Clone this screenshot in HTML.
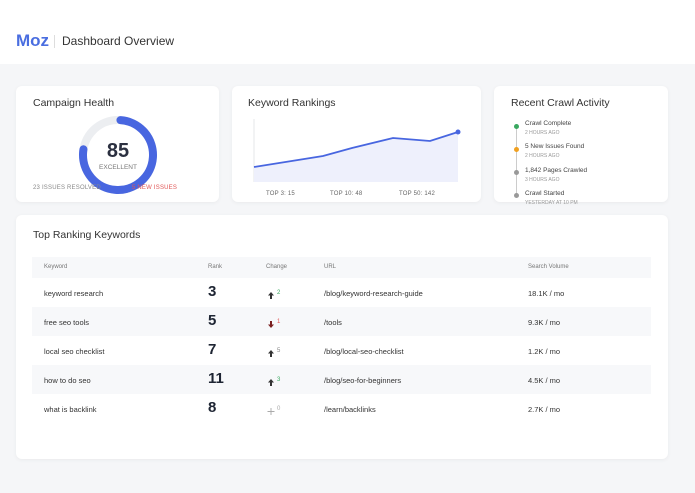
<!DOCTYPE html>
<html><head><style>
*{margin:0;padding:0;box-sizing:border-box}
body{width:695px;height:493px;background:#f5f6f8;font-family:"Liberation Sans",sans-serif;position:relative;overflow:hidden;color:#2b3040}
.hdr{position:absolute;left:0;top:0;width:695px;height:64px;background:#fff}
.logo{position:absolute;left:16px;top:31px;font-size:17px;font-weight:bold;color:#4a6ee0}
.sep{position:absolute;left:54px;top:35px;width:1px;height:13px;background:#ddd}
.title{position:absolute;left:62px;top:34px;font-size:12px;color:#333}
.card{position:absolute;background:#fff;border-radius:6px;box-shadow:0 1px 4px rgba(0,0,0,.05)}
.ct{position:absolute;font-size:10.5px;color:#333}
.sm{position:absolute;font-size:6px;color:#888;letter-spacing:.2px}
.tl{position:absolute;font-size:6.5px;color:#444}
.ts{position:absolute;font-size:5px;color:#999}
.dot{position:absolute;width:5px;height:5px;border-radius:50%;left:514px}
.row{position:absolute;left:32px;width:619px;height:29px}
.row span{position:absolute;font-size:7.5px;color:#333;top:11px}
.row b{position:absolute;left:176px;top:5px;font-size:15px;color:#1e2533}
.row svg{position:absolute;left:235px;top:13px}
.row em{position:absolute;left:245px;top:12px;font-style:normal;font-size:6px}
</style></head><body>
<div class="hdr"><div class="logo">Moz</div><div class="sep"></div><div class="title">Dashboard Overview</div></div>

<div class="card" style="left:16px;top:86px;width:203px;height:116px"></div>
<div class="ct" style="left:33px;top:97px">Campaign Health</div>
<svg style="position:absolute;left:76px;top:113px" width="84" height="84">
<circle cx="42" cy="42" r="35" fill="none" stroke="#eceef1" stroke-width="8"/>
<circle cx="42" cy="42" r="35" fill="none" stroke="#4866e0" stroke-width="8" stroke-linecap="round" stroke-dasharray="168 300" transform="rotate(-86 42 42)"/>
</svg>
<div style="position:absolute;left:76px;top:140px;width:84px;text-align:center;font-size:20px;font-weight:bold;color:#2b3040">85</div>
<div style="position:absolute;left:76px;top:164px;width:84px;text-align:center;font-size:6.5px;color:#777">EXCELLENT</div>
<div class="sm" style="left:33px;top:185px">23 ISSUES RESOLVED</div>
<div class="sm" style="left:132px;top:185px;color:#e05555">5 NEW ISSUES</div>

<div class="card" style="left:232px;top:86px;width:249px;height:116px"></div>
<div class="ct" style="left:248px;top:97px">Keyword Rankings</div>
<svg style="position:absolute;left:232px;top:86px" width="249" height="116">
<line x1="22" y1="33" x2="22" y2="96" stroke="#e5e7ea"/>
<path d="M22 81 L91 70 L120 62 L161 52 L198 55 L226 46 L226 96 L22 96Z" fill="#eef0fc"/>
<path d="M22 81 L91 70 L120 62 L161 52 L198 55 L226 46" fill="none" stroke="#4866e0" stroke-width="1.8"/>
<circle cx="226" cy="46" r="2.5" fill="#4866e0"/>
</svg>
<div class="sm" style="left:266px;top:191px;color:#666">TOP 3: 15</div>
<div class="sm" style="left:330px;top:191px;color:#666">TOP 10: 48</div>
<div class="sm" style="left:399px;top:191px;color:#666">TOP 50: 142</div>

<div class="card" style="left:494px;top:86px;width:174px;height:116px"></div>
<div class="ct" style="left:511px;top:97px">Recent Crawl Activity</div>
<div style="position:absolute;left:516px;top:127px;width:1px;height:68px;background:#ccc"></div>
<div class="dot" style="top:124px;background:#3aa860"></div>
<div class="dot" style="top:147px;background:#f0a020"></div>
<div class="dot" style="top:170px;background:#999"></div>
<div class="dot" style="top:193px;background:#999"></div>
<div class="tl" style="left:525px;top:120px">Crawl Complete</div><div class="ts" style="left:525px;top:130px">2 HOURS AGO</div>
<div class="tl" style="left:525px;top:143px">5 New Issues Found</div><div class="ts" style="left:525px;top:153px">2 HOURS AGO</div>
<div class="tl" style="left:525px;top:167px">1,842 Pages Crawled</div><div class="ts" style="left:525px;top:177px">3 HOURS AGO</div>
<div class="tl" style="left:525px;top:190px">Crawl Started</div><div class="ts" style="left:525px;top:200px">YESTERDAY AT 10 PM</div>

<div class="card" style="left:16px;top:215px;width:652px;height:244px"></div>
<div class="ct" style="left:33px;top:229px">Top Ranking Keywords</div>
<div class="row" style="top:257px;height:21px;background:#f7f8fa">
<span style="left:12px;top:7px;font-size:6px;color:#777">Keyword</span>
<span style="left:176px;top:7px;font-size:6px;color:#777">Rank</span>
<span style="left:234px;top:7px;font-size:6px;color:#777">Change</span>
<span style="left:292px;top:7px;font-size:6px;color:#777">URL</span>
<span style="left:496px;top:7px;font-size:6px;color:#777">Search Volume</span>
</div>
<div class="row" style="top:278px"><span style="left:12px">keyword research</span><b>3</b><svg width="8" height="8"><path d="M4 1L1 4.5H3V8H5V4.5H7Z" fill="#333"/></svg><em style="color:#3aa860">2</em><span style="left:292px">/blog/keyword-research-guide</span><span style="left:496px">18.1K / mo</span></div>
<div class="row" style="top:307px;background:#f7f8fa"><span style="left:12px">free seo tools</span><b>5</b><svg width="8" height="8"><path d="M4 8L1 4.5H3V1H5V4.5H7Z" fill="#7a2020"/></svg><em style="color:#e05555">1</em><span style="left:292px">/tools</span><span style="left:496px">9.3K / mo</span></div>
<div class="row" style="top:336px"><span style="left:12px">local seo checklist</span><b>7</b><svg width="8" height="8"><path d="M4 1L1 4.5H3V8H5V4.5H7Z" fill="#333"/></svg><em style="color:#888">5</em><span style="left:292px">/blog/local-seo-checklist</span><span style="left:496px">1.2K / mo</span></div>
<div class="row" style="top:365px;background:#f7f8fa"><span style="left:12px">how to do seo</span><b>11</b><svg width="8" height="8"><path d="M4 1L1 4.5H3V8H5V4.5H7Z" fill="#333"/></svg><em style="color:#3aa860">3</em><span style="left:292px">/blog/seo-for-beginners</span><span style="left:496px">4.5K / mo</span></div>
<div class="row" style="top:394px"><span style="left:12px">what is backlink</span><b>8</b><svg width="8" height="8"><path d="M4 1V8M0.5 4.5H7.5" stroke="#aaa" stroke-width="0.9"/></svg><em style="color:#aaa">0</em><span style="left:292px">/learn/backlinks</span><span style="left:496px">2.7K / mo</span></div>
</body></html>
